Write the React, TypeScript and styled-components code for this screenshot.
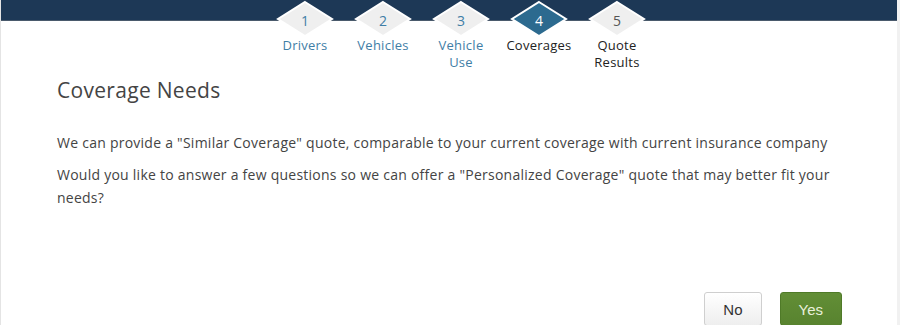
import styled, { createGlobalStyle } from "styled-components";

const GlobalStyle = createGlobalStyle`
  html, body {
    margin: 0;
    padding: 0;
    background: #ffffff;
  }
  body {
    font-family: "Open Sans", "Liberation Sans", sans-serif;
    color: #444444;
  }
`;

const Page = styled.div`
  width: 900px;
  height: 325px;
  overflow: hidden;
  display: flex;
  background: #f1f1f1;
`;

const Panel = styled.div`
  flex: 1;
  margin-right: 3px;
  border-left: 1px solid #e4e4e4;
  background: #ffffff;
  display: flex;
  flex-direction: column;
`;

const TopBar = styled.div`
  height: 20px;
  background: #1d3856;
  border-bottom: 1px solid #4a5a6c;
`;

const Steps = styled.ol`
  list-style: none;
  margin: -21px 0 0;
  padding: 0 0 0 265px;
  display: flex;
`;

const Step = styled.li`
  width: 78px;
  display: flex;
  flex-direction: column;
  align-items: center;
`;

const Badge = styled.div`
  position: relative;
  width: 60px;
  height: 38px;
  display: flex;
  align-items: center;
  justify-content: center;

  & svg {
    position: absolute;
    inset: 0;
  }
`;

const Num = styled.span<{ state: string }>`
  position: relative;
  font-size: 14px;
  margin-top: 2px;
  color: ${({ state }) =>
    state === "current" ? "#ffffff" : state === "done" ? "#3f7ea6" : "#555555"};
`;

const Label = styled.span<{ state: string }>`
  margin-top: -1px;
  font-size: 13px;
  line-height: 17px;
  letter-spacing: 0.25px;
  text-align: center;
  color: ${({ state }) => (state === "done" ? "#3f7ea6" : "#222222")};
`;

const Content = styled.div`
  padding: 0 55px 0 56px;
  display: flex;
  flex-direction: column;
  flex: 1;
`;

const Title = styled.h2`
  margin: 5px 0 27px;
  font-size: 21px;
  line-height: 28px;
  letter-spacing: 0.3px;
  font-weight: 400;
  color: #444444;
`;

const Text = styled.p`
  margin: 0 0 9px;
  font-size: 14px;
  line-height: 23px;
  letter-spacing: 0.25px;
  color: #444444;
`;

const Actions = styled.div`
  margin-top: auto;
  display: flex;
  justify-content: flex-end;
  gap: 18px;
  transform: translateY(1px);
`;

const Button = styled.button<{ primary?: boolean }>`
  height: 34px;
  padding: 0 18px;
  border-radius: 3px;
  font-family: "Liberation Sans", Arial, sans-serif;
  font-size: 15px;
  cursor: pointer;
  border: 1px solid ${({ primary }) => (primary ? "#4f7a28" : "#cfcfcf")};
  color: ${({ primary }) => (primary ? "#e8f0dc" : "#333333")};
  background: ${({ primary }) =>
    primary
      ? "linear-gradient(#628e36, #58832f)"
      : "linear-gradient(#ffffff, #eeeeee)"};
`;

const steps = [
  { n: 1, label: "Drivers", state: "done" },
  { n: 2, label: "Vehicles", state: "done" },
  { n: 3, label: "Vehicle Use", state: "done" },
  { n: 4, label: "Coverages", state: "current" },
  { n: 5, label: "Quote Results", state: "todo" },
];

const Diamond = ({ active }: { active: boolean }) => (
  <svg width="60" height="38" viewBox="0 0 60 38">
    <polygon
      points="30,2 57,19 30,36 3,19"
      fill={active ? "#2c6a8f" : "#efefef"}
      stroke="#ffffff"
      strokeWidth="2"
    />
  </svg>
);

export default function App() {
  return (
    <>
      <GlobalStyle />
      <Page>
        <Panel>
          <TopBar />
          <Steps>
            {steps.map((s) => (
              <Step key={s.n}>
                <Badge>
                  <Diamond active={s.state === "current"} />
                  <Num state={s.state}>{s.n}</Num>
                </Badge>
                <Label state={s.state}>
                  {s.label.split(" ").map((w, i) => (
                    <div key={i}>{w}</div>
                  ))}
                </Label>
              </Step>
            ))}
          </Steps>
          <Content>
            <Title>Coverage Needs</Title>
            <Text>
              We can provide a "Similar Coverage" quote, comparable to your current
              coverage with current insurance company
            </Text>
            <Text>
              Would you like to answer a few questions so we can offer a
              "Personalized Coverage" quote that may better fit your needs?
            </Text>
            <Actions>
              <Button>No</Button>
              <Button primary>Yes</Button>
            </Actions>
          </Content>
        </Panel>
      </Page>
    </>
  );
}
